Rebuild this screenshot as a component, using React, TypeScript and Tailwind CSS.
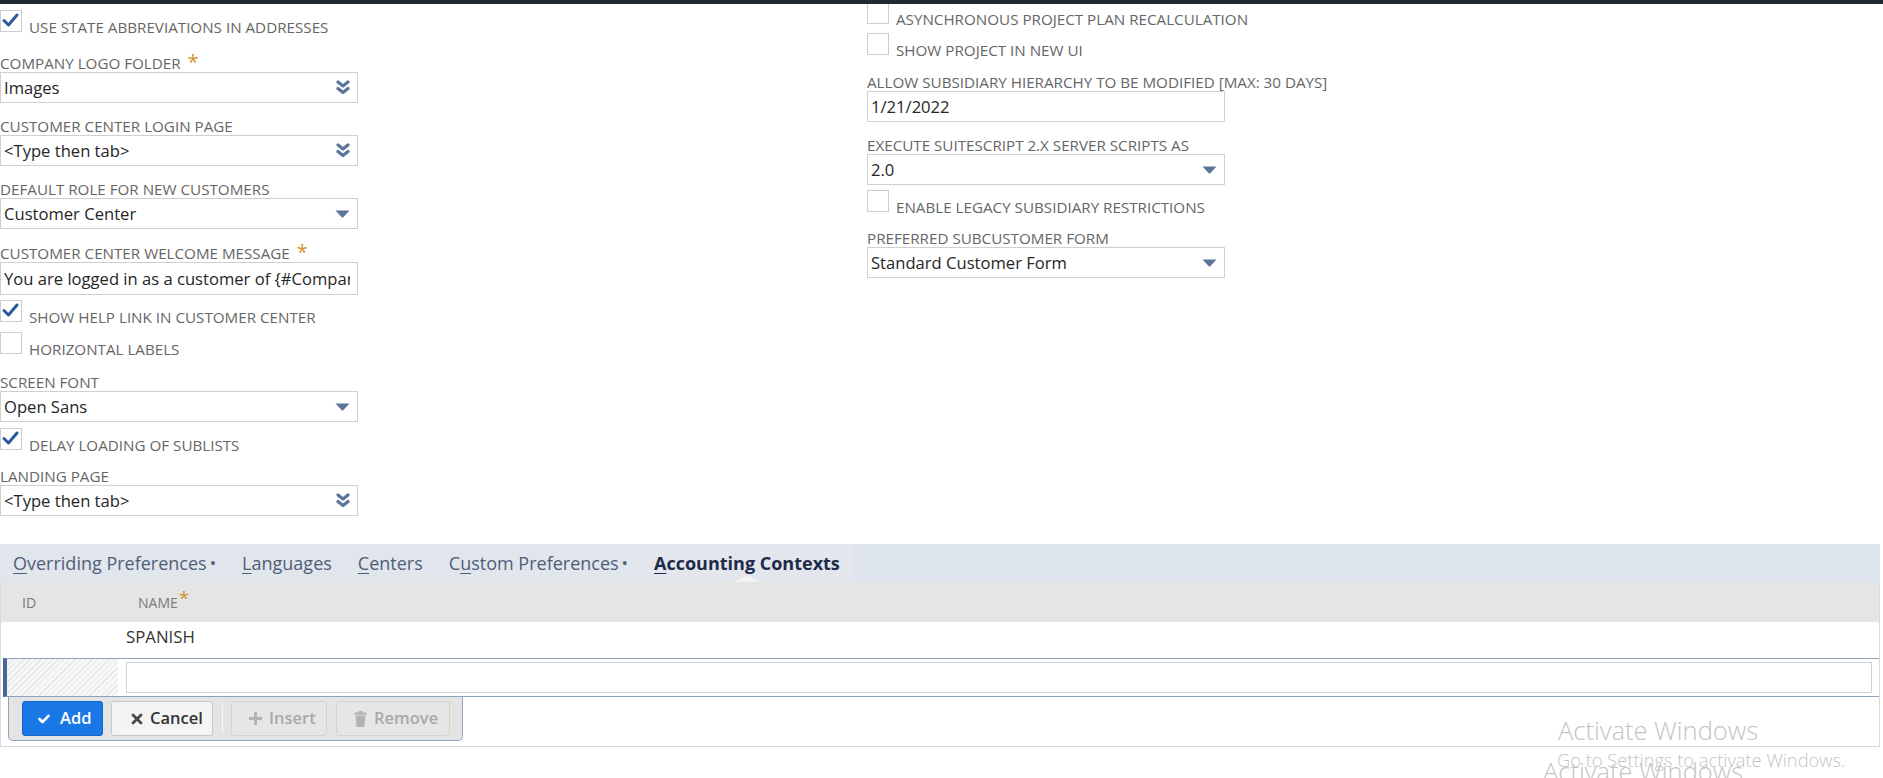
import React from "react";

function CheckMark() {
  return (
    <svg width="17" height="16" viewBox="0 0 17 16" className="block">
      <path d="M2 8.5 L6.5 13 L15 3" fill="none" stroke="#2d5a9e" strokeWidth="3" strokeLinecap="round" strokeLinejoin="round" />
    </svg>
  );
}

function Checkbox({ checked }: { checked?: boolean }) {
  return (
    <div className="w-[22px] h-[22px] shrink-0 border border-[#cdcdcd] bg-white pl-[1px] pt-[1px]">
      {checked ? <CheckMark /> : null}
    </div>
  );
}

function CheckRow({ label, checked, className }: { label: string; checked?: boolean; className?: string }) {
  return (
    <div className={"flex items-start gap-[7px] " + (className ?? "")}>
      <Checkbox checked={checked} />
      <span className="mt-[7px] text-[15.2px] leading-[20px] text-[#666666] uppercase whitespace-nowrap">{label}</span>
    </div>
  );
}

function Label({ text, req, className }: { text: string; req?: boolean; className?: string }) {
  return (
    <div className={"h-[20px] pt-[1px] text-[15.2px] leading-[20px] text-[#666666] uppercase whitespace-nowrap " + (className ?? "")}>
      {text}
      {req ? <span className="ml-[7px] text-[20px] leading-[0] text-[#d4912a]">*</span> : null}
    </div>
  );
}

function DoubleChevron() {
  return (
    <svg width="14" height="15" viewBox="0 0 14 15" className="block shrink-0">
      <path d="M2 2 L7 6 L12 2" fill="none" stroke="#5b7499" strokeWidth="3.2" strokeLinecap="round" strokeLinejoin="round" />
      <path d="M2 8.5 L7 12.5 L12 8.5" fill="none" stroke="#5b7499" strokeWidth="3.2" strokeLinecap="round" strokeLinejoin="round" />
    </svg>
  );
}

function Tri() {
  return (
    <svg width="15" height="8" viewBox="0 0 15 8" className="block shrink-0">
      <path d="M0.5 0.5 L14.5 0.5 L8.2 7.3 Q7.5 8 6.8 7.3 Z" fill="#5b7499" />
    </svg>
  );
}

function Field({ value, icon, className }: { value: string; icon?: "double" | "tri"; className?: string }) {
  return (
    <div className={"h-[31px] w-[358px] border border-[#d0d0d0] bg-white flex items-center pl-[3px] pr-[7px] " + (className ?? "")}>
      <div className="flex-1 text-[16.6px] leading-[24px] text-[#262626] whitespace-nowrap overflow-hidden">{value}</div>
      {icon === "double" ? <DoubleChevron /> : icon === "tri" ? <Tri /> : null}
    </div>
  );
}

function TabLabel({ pre, u, rest, dot, active }: { pre?: string; u: string; rest: string; dot?: boolean; active?: boolean }) {
  return (
    <div
      className={
        active
          ? "relative flex items-center px-[13px] text-[18px] font-bold text-[#1c2b4a] bg-[#e3e6ec] whitespace-nowrap"
          : "relative flex items-center px-[13px] text-[18px] text-[#4f5e78] whitespace-nowrap"
      }
    >
      <span>
        {pre}
        <span className="underline underline-offset-[3px]">{u}</span>
        {rest}
      </span>
      {dot ? <span className="ml-[3px] text-[17px]">•</span> : null}
      {active ? (
        <svg width="26" height="6" viewBox="0 0 26 6" className="absolute bottom-0 left-1/2 -translate-x-1/2">
          <path d="M0 6 L10 1 Q13 -0.5 16 1 L26 6 Z" fill="#f4f4f4" />
        </svg>
      ) : null}
    </div>
  );
}

function IconCheckWhite() {
  return (
    <svg width="12" height="10" viewBox="0 0 12 10" className="block">
      <path d="M1.5 5 L4.5 8 L10.5 1.8" fill="none" stroke="#ffffff" strokeWidth="2.6" strokeLinecap="round" strokeLinejoin="round" />
    </svg>
  );
}

function IconTimes() {
  return (
    <svg width="12" height="12" viewBox="0 0 12 12" className="block">
      <path d="M2 2 L10 10 M10 2 L2 10" fill="none" stroke="#4a4a4a" strokeWidth="2.8" strokeLinecap="round" />
    </svg>
  );
}

function IconPlus() {
  return (
    <svg width="13" height="13" viewBox="0 0 13 13" className="block">
      <path d="M6.5 1 L6.5 12 M1 6.5 L12 6.5" fill="none" stroke="#b3b3b3" strokeWidth="3" strokeLinecap="round" />
    </svg>
  );
}

function IconTrash() {
  return (
    <svg width="13" height="16" viewBox="0 0 13 16" className="block">
      <rect x="4.5" y="0" width="4" height="2" rx="0.6" fill="#b3b3b3" />
      <rect x="0.5" y="1.6" width="12" height="2.2" rx="0.6" fill="#b3b3b3" />
      <path d="M1.6 4.6 L11.4 4.6 L10.5 15.2 Q10.4 16 9.6 16 L3.4 16 Q2.6 16 2.5 15.2 Z" fill="#b3b3b3" />
    </svg>
  );
}

export default function App() {
  return (
    <div className="relative w-[1883px] h-[778px] overflow-hidden bg-white font-['Open_Sans','Noto_Sans',sans-serif]">
      <div className="relative z-10 h-[4px] bg-[#23282e]" />

      <div className="flex">
        {/* Left column */}
        <div className="w-[358px] shrink-0 pt-[6px] flex flex-col">
          <CheckRow label="Use state abbreviations in addresses" checked />
          <Label text="Company Logo Folder" req className="mt-[15px]" />
          <Field value="Images" icon="double" />
          <Label text="Customer Center Login Page" className="mt-[12px]" />
          <Field value="<Type then tab>" icon="double" />
          <Label text="Default Role for New Customers" className="mt-[12px]" />
          <Field value="Customer Center" icon="tri" />
          <Label text="Customer Center Welcome Message" req className="mt-[13px]" />
          <Field value="You are logged in as a customer of {#CompanyName}." className="h-[33px]" />
          <CheckRow label="Show help link in Customer Center" checked className="mt-[5px]" />
          <CheckRow label="Horizontal Labels" className="mt-[5px]" />
          <Label text="Screen Font" className="mt-[12px]" />
          <Field value="Open Sans" icon="tri" />
          <CheckRow label="Delay loading of sublists" checked className="mt-[6px]" />
          <Label text="Landing Page" className="mt-[10px]" />
          <Field value="<Type then tab>" icon="double" />
        </div>

        {/* Right column */}
        <div className="ml-[509px] w-[358px] shrink-0 -mt-[2px] flex flex-col">
          <CheckRow label="Asynchronous Project Plan Recalculation" />
          <CheckRow label="Show Project in New UI" className="mt-[4px]" />
          <Label text="Allow Subsidiary Hierarchy to be Modified [Max: 30 Days]" className="mt-[11px]" />
          <Field value="1/21/2022" />
          <Label text="Execute SuiteScript 2.x Server Scripts As" className="mt-[12px]" />
          <Field value="2.0" icon="tri" />
          <CheckRow label="Enable Legacy Subsidiary Restrictions" className="mt-[5px]" />
          <Label text="Preferred Subcustomer Form" className="mt-[10px]" />
          <Field value="Standard Customer Form" icon="tri" />
        </div>
      </div>

      {/* Sublist tabs */}
      <div className="mt-[28px] mr-[3px]">
        <div className="h-[38px] flex bg-[#dee5ef]">
          <div className="flex bg-[#e1e5ec]">
            <TabLabel u="O" rest="verriding Preferences" dot />
            <TabLabel u="L" rest="anguages" />
            <TabLabel u="C" rest="enters" />
            <TabLabel pre="C" u="u" rest="stom Preferences" dot />
            <TabLabel u="A" rest="ccounting Contexts" active />
          </div>
        </div>

        <div className="border-x border-b border-[#dadada] pb-[5px]">
          <div className="h-[40px] bg-[#e5e5e5] flex items-center text-[14px] text-[#7a7a7a] uppercase">
            <div className="w-[119px] pl-[21px]">ID</div>
            <div className="pl-[18px]">
              Name<span className="ml-[1px] text-[19px] leading-[0] text-[#d4912a] relative -top-[3px]">*</span>
            </div>
          </div>
          <div className="h-[36px] bg-white flex items-center text-[16.8px] text-[#333333] uppercase">
            <div className="w-[119px]" />
            <div className="pl-[6px] -mt-[6px]">Spanish</div>
          </div>
          <div className="ml-[2px] h-[39px] border-y border-[#8ea1bf] border-l-4 border-l-[#4b6592] flex">
            <div className="w-[111px] bg-[repeating-linear-gradient(135deg,#e6e6e6_0px,#e6e6e6_1px,#f7f7f7_1px,#f7f7f7_4px)]" />
            <div className="flex-1 flex items-center ml-[8px] mr-[7px]">
              <div className="h-[31px] w-full border border-[#cfd3d9] bg-white" />
            </div>
          </div>
          <div className="ml-[7px] w-[455px] h-[44px] bg-[#e4e4e4] border-x border-b border-[#8ea1bf] rounded-b-[5px] flex items-center pl-[13px] text-[16.5px] font-semibold">
            <div className="h-[35px] w-[81px] rounded-[3px] bg-[#1a78e6] border border-[#1666c9] flex items-center pl-[15px] gap-[10px] text-white">
              <IconCheckWhite />
              <span>Add</span>
            </div>
            <div className="ml-[8px] h-[35px] w-[102px] rounded-[3px] bg-[#f4f4f4] border border-[#c6c6c6] flex items-center pl-[19px] gap-[7px] text-[#333333]">
              <IconTimes />
              <span>Cancel</span>
            </div>
            <div className="ml-[9px] w-[1px] h-[28px] bg-[#f7f7f7]" />
            <div className="ml-[8px] h-[35px] w-[96px] rounded-[3px] bg-[#e6e6e6] border border-[#d3d3d3] flex items-center pl-[17px] gap-[7px] text-[#a9a9a9]">
              <IconPlus />
              <span>Insert</span>
            </div>
            <div className="ml-[9px] h-[35px] w-[114px] rounded-[3px] bg-[#e6e6e6] border border-[#d3d3d3] flex items-center pl-[17px] gap-[7px] text-[#a9a9a9]">
              <IconTrash />
              <span>Remove</span>
            </div>
          </div>
        </div>
      </div>

      {/* Windows activation watermark overlay */}
      <div className="absolute left-[1558px] top-[718px] text-[25.5px] leading-none font-light text-[#c4c4c4] whitespace-nowrap">Activate Windows</div>
      <div className="absolute left-[1557px] top-[751px] text-[18.3px] leading-none font-light text-[#c4c4c4] whitespace-nowrap">Go to Settings to activate Windows.</div>
      <div className="absolute left-[1543px] top-[759px] text-[25.5px] leading-none font-light text-[#c4c4c4] whitespace-nowrap">Activate Windows</div>
    </div>
  );
}
